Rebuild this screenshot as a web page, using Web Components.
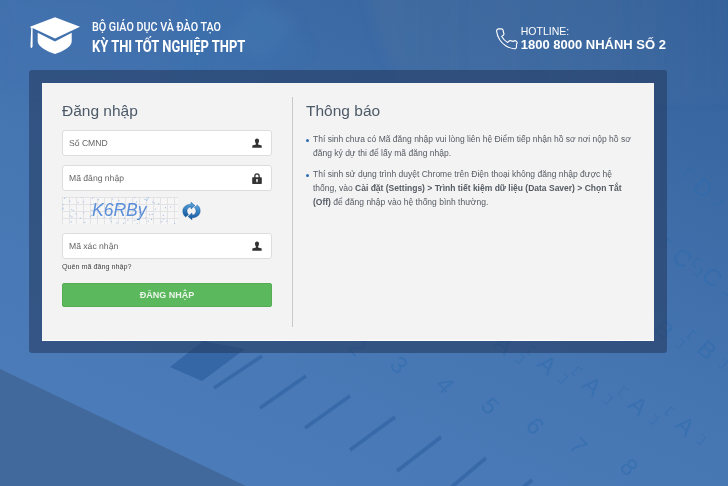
<!DOCTYPE html>
<html lang="vi">
<head>
<meta charset="utf-8">
<title>Kỳ thi tốt nghiệp THPT</title>
<style>
  html, body { margin: 0; padding: 0; }
  body { font-family: "Liberation Sans", Arial, sans-serif; }
</style>
</head>
<body>
<exam-page>
  <exam-backdrop slot="backdrop"></exam-backdrop>
  <exam-header></exam-header>
  <exam-panel>
    <login-form slot="left"></login-form>
    <notice-board slot="right" heading="Thông báo">
      <li>Thí sinh chưa có Mã đăng nhập vui lòng liên hệ Điểm tiếp nhận hồ sơ nơi nộp hồ sơ đăng ký dự thi để lấy mã đăng nhập.</li>
      <li>Thí sinh sử dụng trình duyệt Chrome trên Điện thoại không đăng nhập được hệ thống, vào <b>Cài đặt (Settings) &gt; Trình tiết kiệm dữ liệu (Data Saver) &gt; Chọn Tắt (Off)</b> để đăng nhập vào hệ thống bình thường.</li>
    </notice-board>
  </exam-panel>
</exam-page>

<script>
(function() {

function shadow(el, html) {
  const template = document.createElement("template");
  template.innerHTML = html;
  el.attachShadow({mode: "open"}).appendChild(template.content.cloneNode(true));
}

/* page frame: backdrop and content share one grid cell */
class ExamPage extends HTMLElement {
  constructor() {
    super();
    shadow(this, `<style>
      :host { display: grid; width: 728px; height: 486px; overflow: hidden; background: #4577b4; }
      .layer { grid-area: 1 / 1; min-width: 0; min-height: 0; }
      .content { display: flex; flex-direction: column; }
    </style>
    <div class="layer"><slot name="backdrop"></slot></div>
    <div class="layer content"><slot></slot></div>`);
  }
}

/* answer sheet picture behind the page */
class ExamBackdrop extends HTMLElement {
  constructor() {
    super();
    const bars = [[214,388,262,356],[260,408,306,376],[305,428,350,396],[350,450,395,417],[397,471,441,437],[448,490,486,458],[520,490,532,480]];
    const digits = [["2",357,347],["3",399,365],["4",445,385],["5",490,406],["6",535,426],["7",578,446],["8",629,467]];
    const letters = [["A",504,345],["A",547,365],["A",592,386],["A",638,406],["A",685,426],["B",664,330],["C",682,258],["D",703,188],["C",712,277],["B",707,350]];
    const ink = "#2f6cae";
    let marks = "";
    bars.forEach(b => marks += `<line x1="${b[0]}" y1="${b[1]}" x2="${b[2]}" y2="${b[3]}" stroke="#376aa9" stroke-width="3.6"/>`);
    digits.forEach(d => marks += `<text x="${d[1]}" y="${d[2]}" transform="rotate(48 ${d[1]} ${d[2]})" text-anchor="middle" dy="8" font-size="24" fill="${ink}" opacity=".55">${d[0]}</text>`);
    letters.forEach(l => marks += `<g transform="rotate(42 ${l[1]} ${l[2]})" fill="none" stroke="${ink}" opacity=".55">
      <text x="${l[1]}" y="${l[2]}" text-anchor="middle" dy="8" font-size="24" fill="${ink}" stroke="none">${l[0]}</text>
      <path d="M${l[1]-18} ${l[2]-5}h-5v9h4M${l[1]+18} ${l[2]-5}h5v9h-4" stroke-width="1"/></g>`);
    shadow(this, `<style>
      :host { display: block; width: 728px; height: 486px; }
      svg { display: block; }
      text { font-family: "Liberation Sans", Arial, sans-serif; }
    </style>
    <svg width="728" height="486" viewBox="0 0 728 486" aria-hidden="true">
      <defs>
        <linearGradient id="base" x1="1" y1="0" x2="0.35" y2="1">
          <stop offset="0" stop-color="#33609a"/>
          <stop offset=".62" stop-color="#4676b2"/>
          <stop offset="1" stop-color="#4b7cb9"/>
        </linearGradient>
        <linearGradient id="haze" x1="0" y1="0" x2="1" y2="0">
          <stop offset="0" stop-color="#4d729f" stop-opacity=".36"/>
          <stop offset=".6" stop-color="#4d729f" stop-opacity=".25"/>
          <stop offset="1" stop-color="#4d729f" stop-opacity="0"/>
        </linearGradient>
        <filter id="soft"><feGaussianBlur stdDeviation="0.7"/></filter>
        <filter id="softer"><feGaussianBlur stdDeviation="6"/></filter>
      </defs>
      <rect width="728" height="486" fill="url(#base)"/>
      <g filter="url(#softer)">
        <path d="M0 -10H200V90H0Z" fill="#3f72b0" opacity=".5"/>
        <path d="M190 -10H255L310 50L240 90H170Z" fill="#3a71b0" opacity=".45"/>
        <path d="M255 0L300 20L262 60L225 40Z" fill="#5583b8" opacity=".15"/>
        <path d="M368 -20C372 35 390 70 420 100H780V-20Z" fill="url(#haze)"/>
      </g>
      <g filter="url(#soft)">
        <path d="M0 369L246 486H0Z" fill="#43699c"/>
        <path d="M170 367L203 341L245 349L202 381Z" fill="#3566a5"/>
        ${marks}
      </g>
    </svg>`);
  }
}

class ExamHeader extends HTMLElement {
  constructor() {
    super();
    shadow(this, `<style>
      :host { display: flex; box-sizing: border-box; height: 70px; padding: 17px 62px 0 29px; justify-content: space-between; color: #fff; }
      .brand, .hotline { display: flex; }
      .brand svg { display: block; margin-right: 11px; }
      .titles { font-family: Roboto, "Liberation Sans", sans-serif; padding-top: 3px; }
      .small { font-size: 12.5px; line-height: 14px; font-weight: 500; transform: scaleX(.86); transform-origin: 0 0; white-space: nowrap; }
      .big { font-size: 16px; line-height: 18px; margin-top: 4px; font-weight: 700; transform: scaleX(.81); transform-origin: 0 0; white-space: nowrap; }
      .hotline { padding-top: 9px; }
      .hotline svg { display: block; margin: 0 3px 0 0; }
      .call { font-size: 10.5px; line-height: 13px; margin-top: -1px; }
      .number { font-size: 13px; line-height: 15px; margin-top: -1px; font-weight: 700; white-space: nowrap; }
    </style>
    <div class="brand">
      <svg width="52" height="38" viewBox="0 0 52 38" fill="#fff">
        <path d="M26 0.3L51 9.7L26 21.5L3.6 11V28.5C3.6 30 3.1 31 2.5 31C1.7 31 1.4 30 1.5 28.5L2.2 11.2L1 9.7Z"/>
        <path d="M8.7 15.8L26 24.5L42.7 15.8V24.5C42.7 30 33 35 26 37C19 35 9 30 8.7 24.5Z"/>
      </svg>
      <div class="titles">
        <div class="small">BỘ GIÁO DỤC VÀ ĐÀO TẠO</div>
        <div class="big">KỲ THI TỐT NGHIỆP THPT</div>
      </div>
    </div>
    <div class="hotline">
      <svg width="24" height="24" viewBox="0 0 24 24" fill="none" stroke="#fff" stroke-width="1.1" stroke-linejoin="round"><path d="M22.5 18.2v2.6a2 2 0 0 1-2.2 2A19.8 19.8 0 0 1 11.7 19.7a19.5 19.5 0 0 1-6-6A19.8 19.8 0 0 1 2.6 5.1 2 2 0 0 1 4.6 2.9h2.6a2 2 0 0 1 2 1.7c.1 1 .3 1.8.6 2.6a2 2 0 0 1-.5 2.1L7.7 10.4a16 16 0 0 0 6 6l1.1-1.1a2 2 0 0 1 2.1-.5c.8.3 1.7.5 2.6.6a2 2 0 0 1 3 2.8z"/></svg>
      <div>
        <div class="call">HOTLINE:</div>
        <div class="number">1800 8000 NHÁNH SỐ 2</div>
      </div>
    </div>`);
  }
}

class ExamPanel extends HTMLElement {
  constructor() {
    super();
    shadow(this, `<style>
      :host { display: block; box-sizing: border-box; width: 638px; height: 283px; margin-left: 29px; padding: 13px 13px 12px; background: rgba(36,58,96,.58); border-radius: 3px; }
      .inner { display: flex; box-sizing: border-box; height: 258px; padding: 14px 0 13px 20px; background: #f3f3f3; border-bottom: 1px solid #fff; }
      .left { width: 231px; box-sizing: border-box; padding-right: 20px; border-right: 1px solid #c9c9c9; }
      .right { flex: 1; padding: 0 21px 0 13px; }
    </style>
    <div class="inner">
      <div class="left"><slot name="left"></slot></div>
      <div class="right"><slot name="right"></slot></div>
    </div>`);
  }
}

class FormField extends HTMLElement {
  constructor() {
    super();
    const icons = {
      user: `<path d="M5 0.5C3.4 0.5 2.8 1.8 3 3.2C3.1 4.2 3.5 5 3.9 5.5V6.4L0.3 7.6V9.7H9.7V7.6L6.1 6.4V5.5C6.5 5 6.9 4.2 7 3.2C7.2 1.8 6.6 0.5 5 0.5Z"/>`,
      lock: `<path fill-rule="evenodd" d="M2.2 4.3V3A2.8 2.8 0 0 1 7.8 3V4.3H9.2C9.6 4.3 9.8 4.5 9.8 4.9V10.3C9.8 10.7 9.6 11 9.2 11H0.8C0.4 11 0.2 10.7 0.2 10.3V4.9C0.2 4.5 0.4 4.3 0.8 4.3ZM3.5 4.3H6.5V3A1.5 1.5 0 0 0 3.5 3ZM5 6A1 1 0 0 0 4.4 7.8V9.3H5.6V7.8A1 1 0 0 0 5 6Z"/>`
    };
    const name = this.getAttribute("icon");
    shadow(this, `<style>
      :host { display: flex; box-sizing: border-box; height: 26px; align-items: center; justify-content: space-between; padding: 0 9px 0 6px; background: #fff; border: 1px solid #ddd; border-radius: 3px; font-size: 8.6px; color: #666; text-rendering: geometricPrecision; }
      svg { display: block; }
    </style>
    <slot></slot>
    <svg width="10" height="${name === "lock" ? 11 : 10}" viewBox="0 0 10 ${name === "lock" ? 11 : 10}" fill="#333">${icons[name]}</svg>`);
  }
}

class CaptchaBox extends HTMLElement {
  constructor() {
    super();
    let seed = 7, dots = "";
    const next = () => (seed = (seed * 137 + 59) % 1009) / 1009;
    for (let i = 0; i < 70; i++)
      dots += `<circle cx="${(next() * 116).toFixed(1)}" cy="${(next() * 27).toFixed(1)}" r=".6"/>`;
    shadow(this, `<style>
      :host { display: flex; align-items: center; height: 27px; }
      .code { position: relative; width: 116px; height: 27px; margin-right: 4px; background-color: #f6f6f6;
        background-image: linear-gradient(#e3e3e6 1px, transparent 1px), linear-gradient(90deg, #e3e3e6 1px, transparent 1px);
        background-size: 7px 7px; overflow: hidden; }
      .code svg { position: absolute; left: 0; top: 0; }
      .code span { position: absolute; left: 30px; top: 2px; font-size: 17.5px; line-height: 22px; font-style: italic; color: #5b8fd8; }
      .renew { display: block; }
    </style>
    <div class="code">
      <svg width="116" height="27" fill="#9dbae3">${dots}</svg>
      <span>K6RBy</span>
    </div>
    <svg class="renew" width="19" height="20" viewBox="0 0 19 20">
      <defs><linearGradient id="blue" x1="0" y1="0" x2="0" y2="1"><stop offset="0" stop-color="#5aa6e0"/><stop offset="1" stop-color="#12569c"/></linearGradient></defs>
      <path fill="url(#blue)" stroke="#0f4f90" stroke-width=".4" d="M9 1.2L13 4.6L9 8V6C6.8 6 5.3 7.3 5 9.6C5 11.5 5.6 12.6 6.6 13.5L3.6 16C1.8 14.6 .8 12.5 .8 10C.9 6 4.3 3.2 9 3.2Z"/>
      <path fill="url(#blue)" stroke="#0f4f90" stroke-width=".4" d="M10 18.8L6 15.4L10 12V14C12.2 14 13.7 12.7 14 10.4C14 8.5 13.4 7.4 12.4 6.5L15.4 4C17.2 5.4 18.2 7.5 18.2 10C18.1 14 14.7 16.8 10 16.8Z"/>
    </svg>`);
  }
}

class LoginForm extends HTMLElement {
  constructor() {
    super();
    shadow(this, `<style>
      :host { display: block; padding-top: 4px; }
      h2 { margin: 0 0 10px; font-size: 15.5px; line-height: 19px; font-weight: 400; color: #4d5a68; }
      form-field { margin-bottom: 9px; }
      form-field.last { margin-bottom: 0; }
      captcha-box { margin: 6px 0 9px; }
      a { display: block; margin-top: 3px; font-size: 7.2px; line-height: 10px; color: #444; text-decoration: none; }
      button { display: block; width: 210px; height: 24px; margin-top: 11px; padding: 0; border: 1px solid #55ac55; border-radius: 2px; background: #5cb85c; color: #e9f5e9; font: 700 9px "Liberation Sans", Arial, sans-serif; }
    </style>
    <h2>Đăng nhập</h2>
    <form-field icon="user">Số CMND</form-field>
    <form-field icon="lock" class="last">Mã đăng nhập</form-field>
    <captcha-box></captcha-box>
    <form-field icon="user" class="last">Mã xác nhận</form-field>
    <a href="#">Quên mã đăng nhập?</a>
    <button type="button">ĐĂNG NHẬP</button>`);
  }
}

class NoticeBoard extends HTMLElement {
  constructor() {
    super();
    shadow(this, `<style>
      :host { display: block; padding-top: 4px; }
      h2 { margin: 0 0 12px; font-size: 15.5px; line-height: 19px; font-weight: 400; color: #4d5a68; }
      ul { margin: 0; padding: 0 0 0 7px; list-style: none; }
      ::slotted(li) { position: relative; margin-bottom: 7px; font-size: 8.5px; line-height: 14px; color: #555b63; }
      ::slotted(li)::before { content: ""; position: absolute; left: -7px; top: 6.5px; width: 3px; height: 3px; border-radius: 50%; background: #2d6cb0; }
    </style>
    <h2>${this.getAttribute("heading")}</h2>
    <ul><slot></slot></ul>`);
  }
}

customElements.define("exam-page", ExamPage);
customElements.define("exam-backdrop", ExamBackdrop);
customElements.define("exam-header", ExamHeader);
customElements.define("exam-panel", ExamPanel);
customElements.define("form-field", FormField);
customElements.define("captcha-box", CaptchaBox);
customElements.define("login-form", LoginForm);
customElements.define("notice-board", NoticeBoard);

})();
</script>
</body>
</html>
